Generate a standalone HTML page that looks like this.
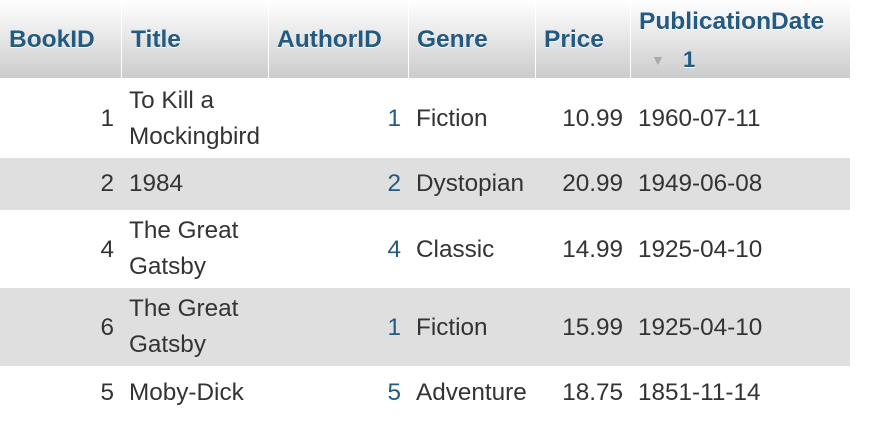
<!DOCTYPE html><html><head><style>
body{margin:0;background:#fff;font-family:"Liberation Sans",sans-serif;font-size:24.3px;color:#333}
.h{position:absolute;top:0;height:78px;background:linear-gradient(#fff,#ccc);}
.hd{position:absolute;color:#235a81;font-weight:bold;text-shadow:0 1px 0 #fff;font-size:24.5px}
.r{position:absolute;left:0;width:850px}
.c{position:absolute;white-space:nowrap}
.b{position:absolute;top:0;width:1px;height:78px;background:#fff}
</style></head><body>
<div class="h" style="left:0;width:850px"></div>
<div class="b" style="left:121px"></div><div class="b" style="left:268px"></div><div class="b" style="left:408px"></div><div class="b" style="left:535px"></div><div class="b" style="left:630px"></div>
<div class="hd" style="left:9px;top:26px">BookID</div>
<div class="hd" style="left:131px;top:26px">Title</div>
<div class="hd" style="left:277px;top:26px">AuthorID</div>
<div class="hd" style="left:417px;top:26px">Genre</div>
<div class="hd" style="left:544px;top:26px">Price</div>
<div class="hd" style="left:639px;top:8px">PublicationDate</div>
<div class="hd" style="left:651px;top:52px;font-size:14px;color:#aaa;text-shadow:none">▼</div>
<div class="hd" style="left:683px;top:47px;font-size:22px">1</div>

<div class="r" style="top:158px;height:52px;background:#dfdfdf"></div>
<div class="r" style="top:288px;height:78px;background:#dfdfdf"></div>

<div class="c" style="right:755px;top:105px">1</div>
<div class="c" style="left:129px;top:83px;line-height:36px">To Kill a<br>Mockingbird</div>
<div class="c" style="right:468px;top:105px;color:#235a81">1</div>
<div class="c" style="left:416px;top:105px">Fiction</div>
<div class="c" style="right:246px;top:105px">10.99</div>
<div class="c" style="left:638px;top:105px">1960-07-11</div>

<div class="c" style="right:755px;top:170px">2</div>
<div class="c" style="left:129px;top:170px">1984</div>
<div class="c" style="right:468px;top:170px;color:#235a81">2</div>
<div class="c" style="left:416px;top:170px">Dystopian</div>
<div class="c" style="right:246px;top:170px">20.99</div>
<div class="c" style="left:638px;top:170px">1949-06-08</div>

<div class="c" style="right:755px;top:236px">4</div>
<div class="c" style="left:129px;top:213px;line-height:36px">The Great<br>Gatsby</div>
<div class="c" style="right:468px;top:236px;color:#235a81">4</div>
<div class="c" style="left:416px;top:236px">Classic</div>
<div class="c" style="right:246px;top:236px">14.99</div>
<div class="c" style="left:638px;top:236px">1925-04-10</div>

<div class="c" style="right:755px;top:314px">6</div>
<div class="c" style="left:129px;top:291px;line-height:36px">The Great<br>Gatsby</div>
<div class="c" style="right:468px;top:314px;color:#235a81">1</div>
<div class="c" style="left:416px;top:314px">Fiction</div>
<div class="c" style="right:246px;top:314px">15.99</div>
<div class="c" style="left:638px;top:314px">1925-04-10</div>

<div class="c" style="right:755px;top:379px">5</div>
<div class="c" style="left:129px;top:379px">Moby-Dick</div>
<div class="c" style="right:468px;top:379px;color:#235a81">5</div>
<div class="c" style="left:416px;top:379px">Adventure</div>
<div class="c" style="right:246px;top:379px">18.75</div>
<div class="c" style="left:638px;top:379px">1851-11-14</div>
</body></html>
